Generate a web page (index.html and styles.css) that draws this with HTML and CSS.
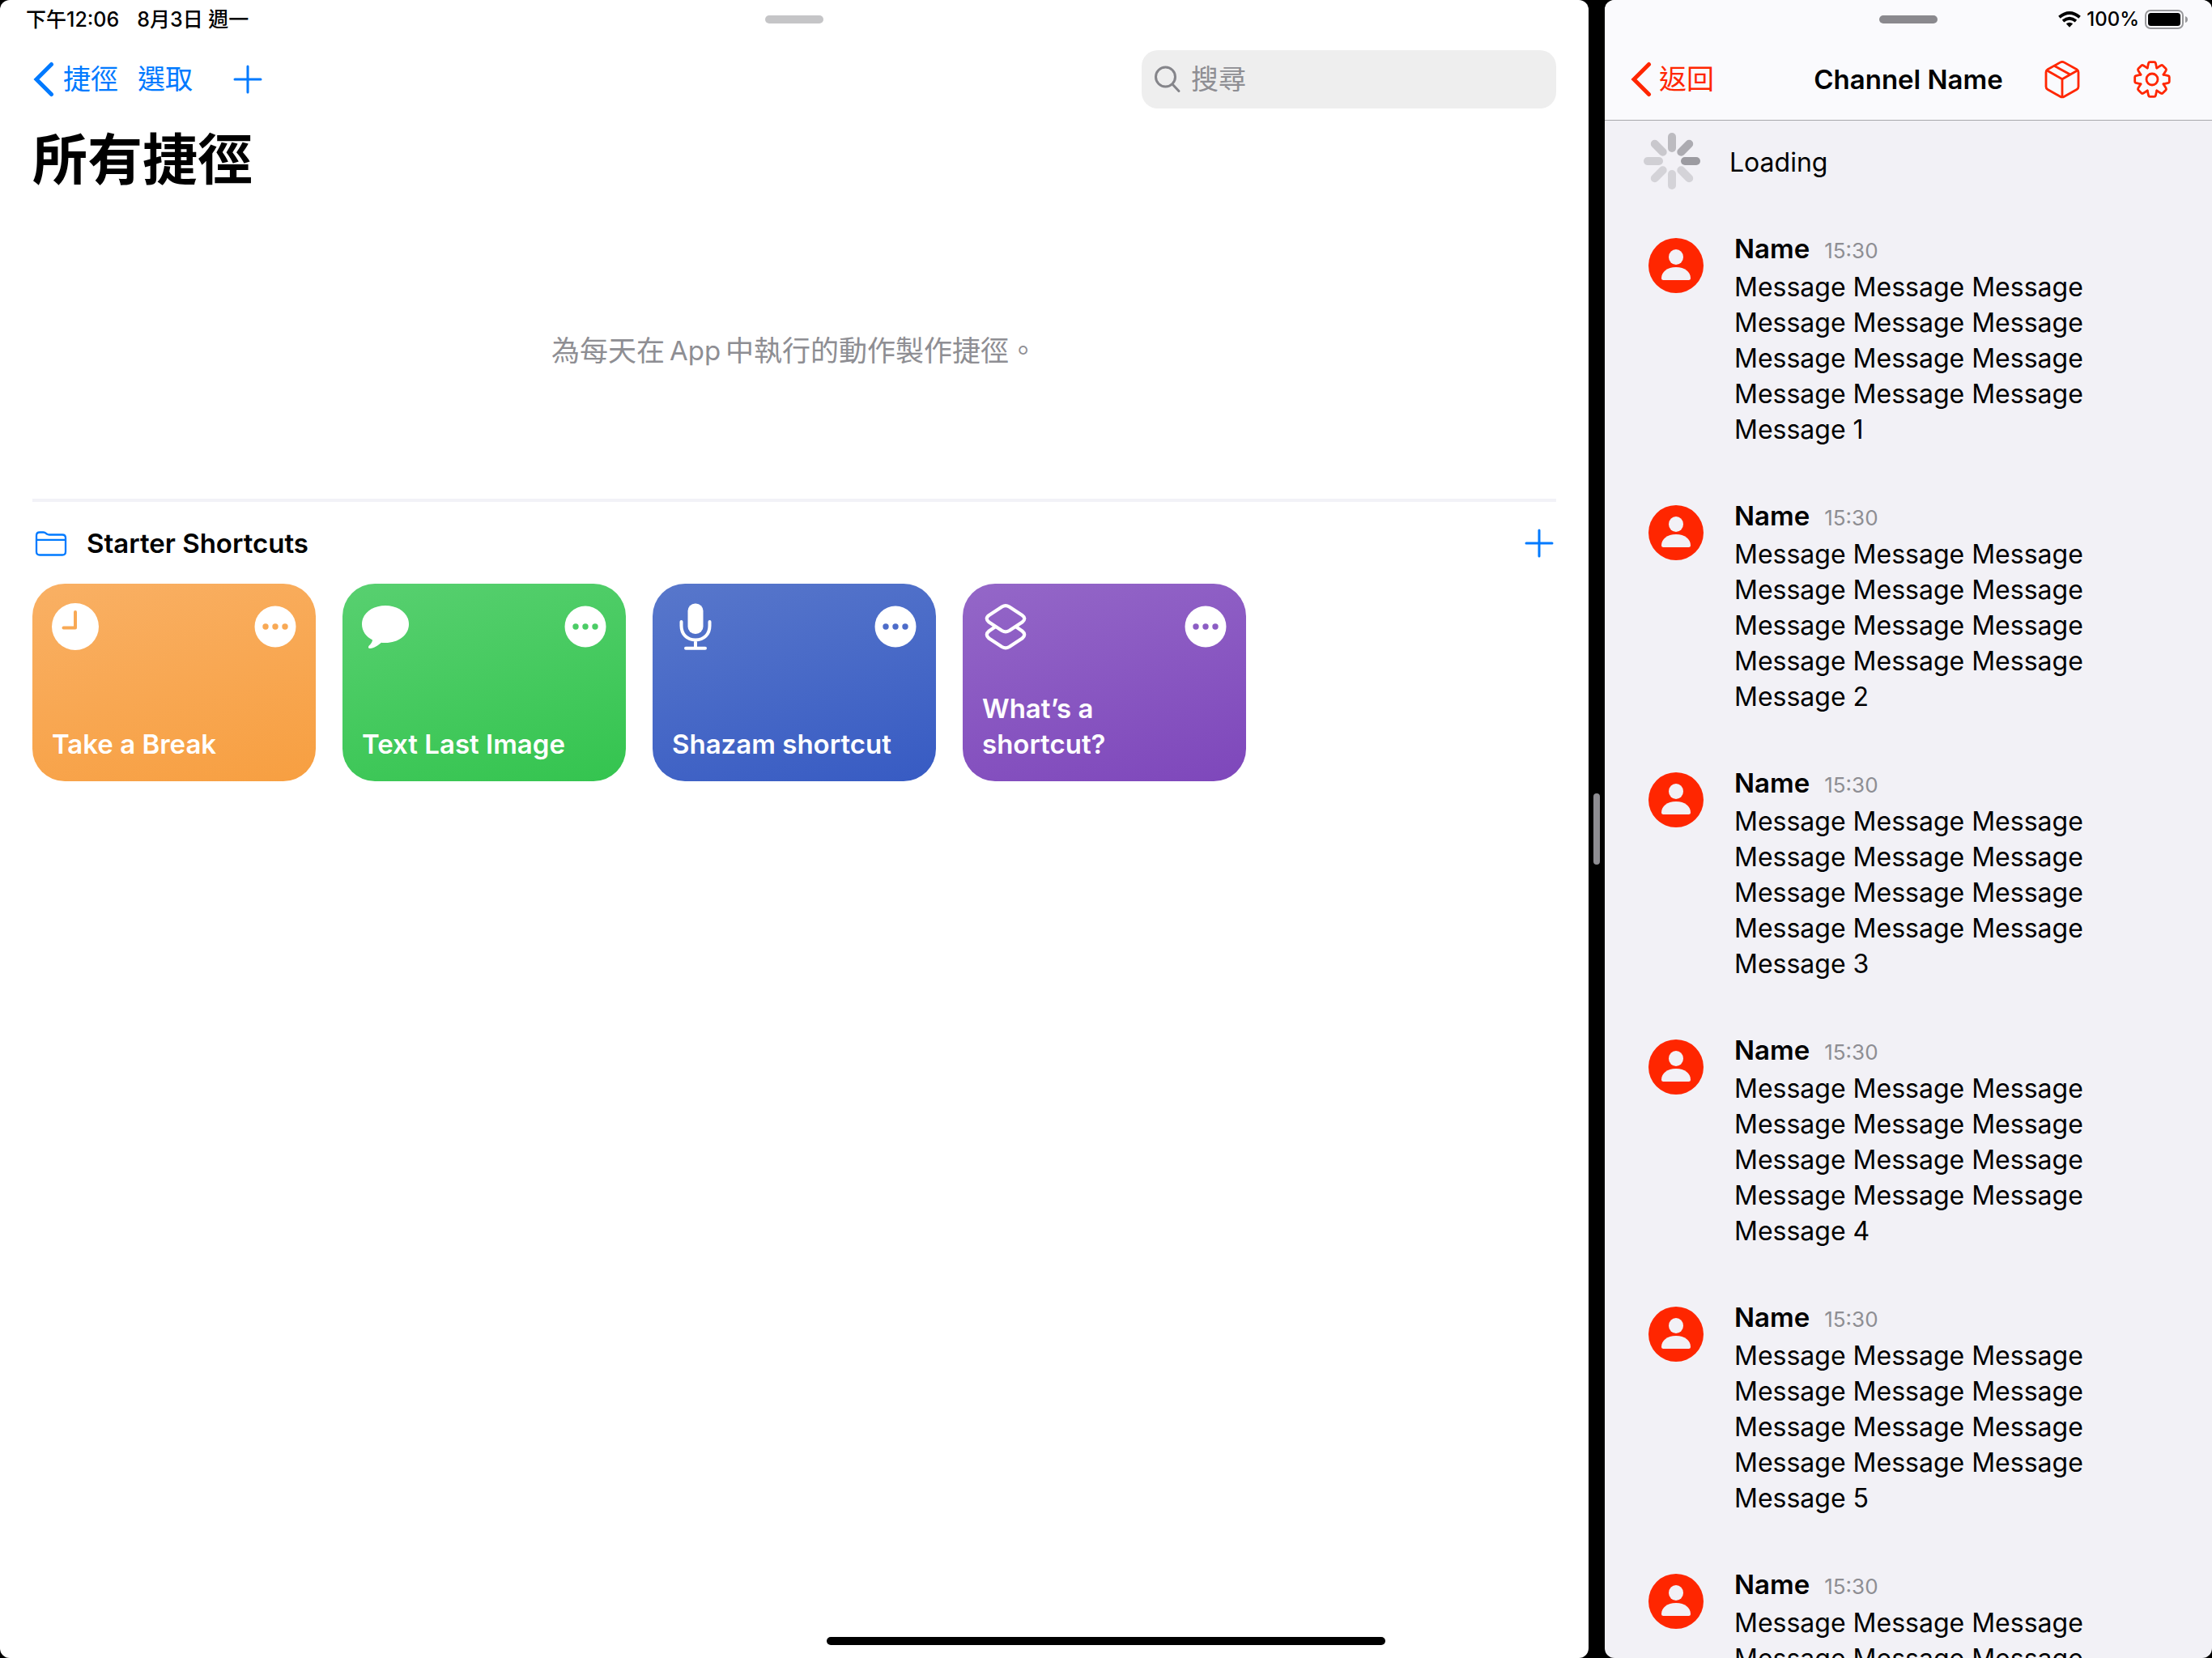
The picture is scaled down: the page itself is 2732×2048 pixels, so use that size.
FILE: index.html
```html
<!DOCTYPE html>
<html lang="zh-Hant">
<head>
<meta charset="utf-8">
<meta name="viewport" content="width=device-width, initial-scale=1">
<title>所有捷徑</title>
<link rel="stylesheet" href="styles.css">
</head>
<body>
<svg class="sprite" aria-hidden="true">
  <symbol id="chevron" viewBox="0 0 26 44"><path d="M22.500 3.500 L4 22 L22.500 40.500" fill="none" stroke="currentColor" stroke-width="5" stroke-linecap="round" stroke-linejoin="miter"/></symbol>
  <symbol id="plus" viewBox="0 0 36 36"><path d="M18 2V34M2 18H34" fill="none" stroke="currentColor" stroke-width="3" stroke-linecap="round"/></symbol>
  <symbol id="more" viewBox="0 0 52 52"><circle cx="26" cy="26" r="25.500" fill="#fff"/><g fill="currentColor"><circle cx="14" cy="26" r="3.700"/><circle cx="26" cy="26" r="3.700"/><circle cx="38" cy="26" r="3.700"/></g></symbol>
  <symbol id="avatar" viewBox="0 0 68 68"><circle cx="34" cy="34" r="34" fill="#ff2600"/><ellipse cx="34" cy="23.500" rx="9" ry="9.500" fill="#f2f1f6"/><path d="M16 49.500C16 42 23 36 34 36S52 42 52 49.500Q52 52 49.500 52H18.500Q16 52 16 49.500Z" fill="#f2f1f6"/></symbol>
</svg>
<div class="split">
  <main class="pane shortcuts">
    <div class="status">
      <span class="status-start"><span>下午12:06</span><span>8月3日 週一</span></span>
      <span class="handle handle-light"></span>
    </div>
    <nav class="nav">
      <a class="back" href="#"><svg class="icon-chevron"><use href="#chevron"/></svg>捷徑</a>
      <button class="text-button">選取</button>
      <button class="icon-button add" aria-label="新增"><svg class="icon-plus"><use href="#plus"/></svg></button>
      <label class="search">
        <svg class="icon-search" viewBox="0 0 34 34"><g fill="none" stroke="currentColor" stroke-width="3" stroke-linecap="round"><circle cx="14.500" cy="14" r="12"/><path d="M23 23L31 31.500"/></g></svg>
        <input type="search" placeholder="搜尋" aria-label="搜尋">
      </label>
    </nav>
    <h1 class="title">所有捷徑</h1>
    <p class="empty">為每天在<span class="latin">App</span>中執行的動作製作捷徑。</p>
    <section class="folder">
      <header class="folder-head">
        <svg class="icon-folder" viewBox="0 0 40 34"><g fill="none" stroke="currentColor" stroke-width="2.300" stroke-linejoin="round"><path d="M2 7.500Q2 3.500 6 3.500H10.500Q12.500 3.500 14 5L15 5.700Q16 6.500 18 6.500H34Q38 6.500 38 10.500V27.500Q38 31.500 34 31.500H6Q2 31.500 2 27.500Z"/><path d="M2 12.800H38"/></g></svg>
        <h2>Starter Shortcuts</h2>
        <button class="icon-button" aria-label="新增"><svg class="icon-plus"><use href="#plus"/></svg></button>
      </header>
      <div class="cards">
        <article class="card orange">
          <div class="card-top">
            <svg class="glyph" viewBox="0 0 60 60"><circle cx="30" cy="30" r="29" fill="#fff"/><path d="M30 12V31.500H15.500" fill="none" stroke="currentColor" stroke-width="4" stroke-linecap="round" stroke-linejoin="round"/></svg>
            <button class="icon-button" aria-label="更多"><svg class="icon-more"><use href="#more"/></svg></button>
          </div>
          <h3>Take a Break</h3>
        </article>
        <article class="card green">
          <div class="card-top">
            <svg class="glyph" viewBox="0 0 60 60"><path d="M30 4C46 4 59 13.500 59 27S46 50 30 50C28 50 26.500 50 25 49.700C21 53 16 56.500 11 57C8.500 57.200 8.500 55 9.800 53.600C12.500 51 14 48.500 14 46.500C6 42.500 1 35.500 1 27C1 13.500 14 4 30 4Z" fill="#fff"/></svg>
            <button class="icon-button" aria-label="更多"><svg class="icon-more"><use href="#more"/></svg></button>
          </div>
          <h3>Text Last Image</h3>
        </article>
        <article class="card blue">
          <div class="card-top">
            <svg class="glyph" viewBox="0 0 60 60"><rect x="20.500" y="1.500" width="19" height="37.500" rx="9" fill="#fff"/><g fill="none" stroke="#fff" stroke-width="4" stroke-linecap="round"><path d="M12.500 24V29C12.500 39.500 19.500 46.500 30 46.500S47.500 39.500 47.500 29V24M30 47V56M18 56.800H42"/></g></svg>
            <button class="icon-button" aria-label="更多"><svg class="icon-more"><use href="#more"/></svg></button>
          </div>
          <h3>Shazam shortcut</h3>
        </article>
        <article class="card purple">
          <div class="card-top">
            <svg class="glyph" viewBox="0 0 60 60"><g fill="none" stroke="#fff" stroke-width="4.200" stroke-linejoin="round"><path d="M25.500 5.500Q30 2.800 34.500 5.500L50.500 16Q56 20 50.500 24.500L34.500 35Q30 37.700 25.500 35L9.500 24.500Q4 20 9.500 16Z"/><path d="M17.500 30L9.500 35.500Q4 40 9.500 44.500L25.500 55Q30 57.700 34.500 55L50.500 44.500Q56 40 50.500 35.500L42.500 30"/></g></svg>
            <button class="icon-button" aria-label="更多"><svg class="icon-more"><use href="#more"/></svg></button>
          </div>
          <h3>What’s a shortcut?</h3>
        </article>
      </div>
    </section>
  </main>
  <div class="divider"><span class="grip"></span></div>
  <aside class="pane chat">
    <header class="chat-head">
      <div class="status">
        <span class="handle handle-dark"></span>
        <span class="status-end">
          <svg class="icon-wifi" viewBox="0 0 28 20"><g fill="none" stroke="currentColor" stroke-width="3.800"><path d="M1.400 7.200Q14 -3.200 26.600 7.200"/><path d="M6 12Q14 5.600 22 12"/></g><path d="M9.800 15.300Q14 12.300 18.200 15.300L14 19.800Z" fill="currentColor"/></svg>
          <span>100%</span>
          <svg class="icon-battery" viewBox="0 0 54 24"><rect x="1" y="1" width="46" height="22" rx="6" fill="none" stroke="#98989b" stroke-width="2"/><rect x="4" y="4" width="40" height="16" rx="3.500"/><path d="M50 8Q53 9 53 12T50 16Z" fill="#98989b"/></svg>
        </span>
      </div>
      <nav class="chat-nav">
        <a class="back" href="#"><svg class="icon-chevron"><use href="#chevron"/></svg>返回</a>
        <h2>Channel Name</h2>
        <div class="actions">
          <button class="icon-button" aria-label="Package"><svg class="icon-action" viewBox="-24 -24 48 48"><g fill="none" stroke="currentColor" stroke-width="2.800" stroke-linejoin="round"><path d="M-2.500 -20.900Q0 -22.300 2.500 -20.900L18 -12.300Q20 -11.200 20 -8.800V9Q20 11.400 18 12.500L2.500 21.200Q0 22.600 -2.500 21.200L-18 12.500Q-20 11.400 -20 9V-8.800Q-20 -11.200 -18 -12.300Z"/><path d="M-19.300 -11.200L0 -0.300L19.300 -11.200M0 -0.300V22M-9.500 -16.500L9.800 -6"/></g></svg></button>
          <button class="icon-button" aria-label="Settings"><svg class="icon-action" viewBox="-24 -24 48 48"><circle r="7" fill="none" stroke="currentColor" stroke-width="2.800"/><path id="tooth" d="M-5.800 -14L-5.300 -16L-4.400 -20Q-4 -21.300 -2.700 -21.300H2.700Q4 -21.300 4.400 -20L5.300 -16L5.800 -14" fill="none" stroke="currentColor" stroke-width="2.800" stroke-linecap="round" stroke-linejoin="round"/><use href="#tooth" transform="rotate(45)"/><use href="#tooth" transform="rotate(90)"/><use href="#tooth" transform="rotate(135)"/><use href="#tooth" transform="rotate(180)"/><use href="#tooth" transform="rotate(225)"/><use href="#tooth" transform="rotate(270)"/><use href="#tooth" transform="rotate(315)"/></svg></button>
        </div>
      </nav>
    </header>
    <div class="loading">
      <svg class="spinner" viewBox="-36 -36 72 72"><g stroke-width="10" stroke-linecap="round"><path d="M0 -30V-16" stroke="#bcbbc0"/><path d="M0 -30V-16" stroke="#acabb1" transform="rotate(45)"/><path d="M0 -30V-16" stroke="#9c9ba1" transform="rotate(90)"/><path d="M0 -30V-16" stroke="#d4d3d8" transform="rotate(135)"/><path d="M0 -30V-16" stroke="#d4d3d8" transform="rotate(180)"/><path d="M0 -30V-16" stroke="#d4d3d8" transform="rotate(225)"/><path d="M0 -30V-16" stroke="#d0cfd4" transform="rotate(270)"/><path d="M0 -30V-16" stroke="#c9c8cd" transform="rotate(315)"/></g></svg>
      <span class="loading-text">Loading</span>
    </div>
    <ul class="messages">
      <li class="message"><svg class="avatar"><use href="#avatar"/></svg><div class="body"><div class="meta"><b>Name</b><time>15:30</time></div><p>Message Message Message Message Message Message Message Message Message Message Message Message Message 1</p></div></li>
      <li class="message"><svg class="avatar"><use href="#avatar"/></svg><div class="body"><div class="meta"><b>Name</b><time>15:30</time></div><p>Message Message Message Message Message Message Message Message Message Message Message Message Message 2</p></div></li>
      <li class="message"><svg class="avatar"><use href="#avatar"/></svg><div class="body"><div class="meta"><b>Name</b><time>15:30</time></div><p>Message Message Message Message Message Message Message Message Message Message Message Message Message 3</p></div></li>
      <li class="message"><svg class="avatar"><use href="#avatar"/></svg><div class="body"><div class="meta"><b>Name</b><time>15:30</time></div><p>Message Message Message Message Message Message Message Message Message Message Message Message Message 4</p></div></li>
      <li class="message"><svg class="avatar"><use href="#avatar"/></svg><div class="body"><div class="meta"><b>Name</b><time>15:30</time></div><p>Message Message Message Message Message Message Message Message Message Message Message Message Message 5</p></div></li>
      <li class="message"><svg class="avatar"><use href="#avatar"/></svg><div class="body"><div class="meta"><b>Name</b><time>15:30</time></div><p>Message Message Message Message Message Message Message Message Message Message Message Message Message 6</p></div></li>
    </ul>
  </aside>
</div>
<div class="home-indicator"></div>
</body>
</html>
```
FILE: styles.css
```css
* { box-sizing: border-box; margin: 0; padding: 0; }
body {
  background: #000;
  color: #000;
  font: 400 32px/44px Inter, "Noto Sans CJK TC", sans-serif;
}
svg { display: block; flex: none; }
button, input { font: inherit; color: inherit; background: none; border: 0; }
button { cursor: pointer; }
a { color: inherit; text-decoration: none; }
.sprite { position: absolute; width: 0; height: 0; }

.split { display: grid; grid-template-columns: 1fr 20px 750px; height: 100vh; }
.pane { min-width: 0; overflow: hidden; border-radius: 12px; }
.shortcuts { background: #fff; padding: 0 40px; }
.chat { background: #f2f1f6; }
.divider { display: flex; align-items: center; justify-content: center; }
.grip { width: 8px; height: 88px; border-radius: 4px; background: #8e8d92; }
.home-indicator {
  position: absolute; bottom: 16px; left: 50%;
  width: 690px; height: 10px; margin-left: -345px;
  border-radius: 5px; background: #000;
}

.status {
  display: grid; grid-template-columns: 1fr auto 1fr; align-items: center;
  height: 48px; font-size: 24px; line-height: 28px; font-weight: 500;
}
.shortcuts .status { margin: 0 -8px; }
.status-start { display: flex; gap: 22px; font-size: 25px; }
.status-end { grid-column: 3; justify-self: end; display: flex; align-items: center; gap: 7px; padding-right: 29px; }
.handle { grid-column: 2; width: 72px; height: 10px; border-radius: 5px; }
.handle-light { background: #c5c5c7; }
.handle-dark { background: #8a898e; }

.nav { display: flex; align-items: center; height: 100px; color: #007aff; font-size: 34px; }
.back { display: flex; align-items: center; gap: 11px; }
.icon-chevron { width: 26px; height: 44px; }
.nav .back { margin-left: 1px; }
.text-button { margin-left: 24px; }
.icon-button { display: flex; }
.add { margin-left: 50px; }
.icon-plus { width: 36px; height: 36px; }
.search {
  display: flex; align-items: center; gap: 12px;
  width: 512px; height: 72px; margin-left: auto; padding: 0 15px;
  border-radius: 20px; background: #eee; color: #85858a;
}
.search input { flex: 1; min-width: 0; outline: 0; }
.search input::placeholder { color: #8e8e93; opacity: 1; }
.icon-search { width: 34px; height: 34px; }

.title { font-size: 68px; line-height: 98px; font-weight: 700; }
.empty {
  display: flex; align-items: center; justify-content: center;
  height: 370px; padding-top: 4px; color: #8e8e93; font-size: 35px;
}
.latin { margin: 0 6px; font-size: 33px; }
.folder { border-top: 4px solid #f2f2f7; }
.folder-head { display: flex; align-items: center; gap: 24px; height: 101px; padding: 0 3px; color: #007aff; }
.folder-head h2 { flex: 1; color: #000; font-size: 33px; font-weight: 600; }
.icon-folder { width: 40px; height: 34px; }
.cards { display: grid; grid-template-columns: repeat(5, 1fr); gap: 33px; }
.card {
  display: flex; flex-direction: column; justify-content: space-between;
  height: 244px; padding: 23px 24px 24px 23px; border-radius: 40px; color: #fff;
}
.card h3 { max-width: 280px; padding-left: 1px; font-size: 33px; font-weight: 600; }
.card-top { display: flex; align-items: center; justify-content: space-between; }
.glyph { width: 60px; height: 60px; }
.icon-more { width: 52px; height: 52px; }
.orange { background: linear-gradient(165deg, #f9b064, #f79f41); }
.green { background: linear-gradient(165deg, #58d070, #34c44f); }
.blue { background: linear-gradient(165deg, #5877cb, #375bc3); }
.purple { background: linear-gradient(165deg, #9467c8, #7e47bb); }
.orange .card-top { color: #f8a955; }
.green .card-top { color: #4bcc65; }
.blue .card-top { color: #4d6cc9; }
.purple .card-top { color: #8c5dc4; }

.chat-head { background: #fafafd; border-bottom: 1px solid #a7a7aa; }
.chat-nav { display: grid; grid-template-columns: 1fr auto 1fr; align-items: center; height: 100px; padding: 0 32px; color: #ff2600; }
.chat-nav .back { gap: 9px; font-size: 34px; }
.chat-nav h2 { color: #000; font-size: 33px; font-weight: 600; }
.actions { display: flex; justify-content: flex-end; gap: 63px; padding-right: 18px; }
.icon-action { width: 48px; height: 48px; }
.icon-wifi { width: 28px; height: 20px; }
.icon-battery { width: 54px; height: 24px; }

.loading { display: flex; align-items: center; gap: 35px; height: 100px; padding-left: 47px; }
.loading-text { padding-top: 4px; }
.spinner { width: 72px; height: 72px; }
.messages { list-style: none; padding: 36px 40px 0 54px; }
.message { display: flex; gap: 38px; margin-bottom: 62px; }
.avatar { width: 68px; height: 68px; margin-top: 9px; }
.body { flex: 1; min-width: 0; }
.meta { display: flex; align-items: baseline; gap: 18px; height: 48px; }
.meta b { font-size: 33px; font-weight: 600; }
.meta time { color: #8e8e93; font-size: 26px; }
```
